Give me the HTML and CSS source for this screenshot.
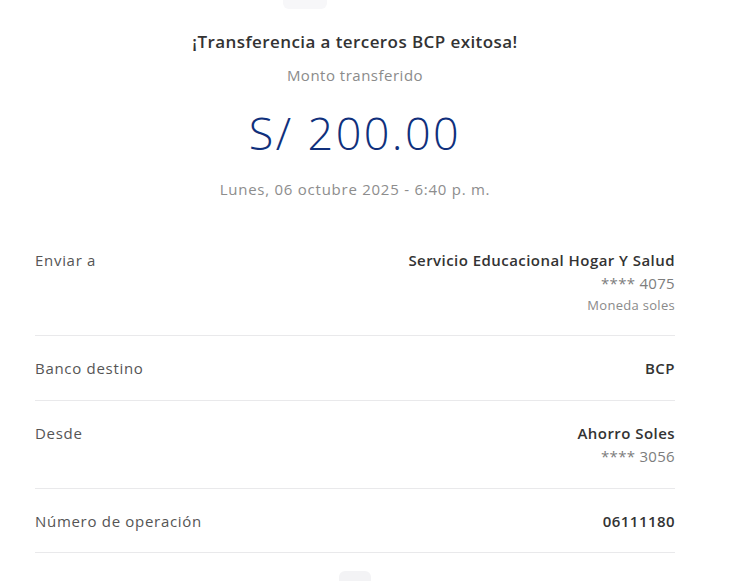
FILE: index.html
```html
<!DOCTYPE html>
<html lang="es">
<head>
<meta charset="utf-8">
<title>Transferencia exitosa</title>
<link rel="stylesheet" href="styles.css">
</head>
<body>
<div class="receipt">
  <div class="top-mark"></div>
  <header class="summary">
    <h1 class="title">¡Transferencia a terceros BCP exitosa!</h1>
    <p class="caption">Monto transferido</p>
    <p class="amount">S/ 200.00</p>
    <p class="date">Lunes, 06 octubre 2025 - 6:40 p. m.</p>
  </header>
  <section class="details">
    <div class="row">
      <span class="label">Enviar a</span>
      <div class="value">
        <span class="strong">Servicio Educacional Hogar Y Salud</span>
        <span class="sub">**** 4075</span>
        <span class="small">Moneda soles</span>
      </div>
    </div>
    <div class="row">
      <span class="label">Banco destino</span>
      <div class="value"><span class="strong">BCP</span></div>
    </div>
    <div class="row">
      <span class="label">Desde</span>
      <div class="value">
        <span class="strong">Ahorro Soles</span>
        <span class="sub">**** 3056</span>
      </div>
    </div>
    <div class="row row-last">
      <span class="label">Número de operación</span>
      <div class="value"><span class="strong">06111180</span></div>
    </div>
  </section>
  <div class="bottom-mark"></div>
</div>
</body>
</html>
```
FILE: styles.css
```css
html, body {
  margin: 0;
  padding: 0;
  background: #ffffff;
}
body {
  font-family: "Open Sans", "Noto Sans", sans-serif;
  color: #333;
  overflow: hidden;
  height: 581px;
}
.receipt {
  width: 640px;
  margin-left: 35px;
  display: flex;
  flex-direction: column;
  align-items: stretch;
}
.top-mark {
  align-self: center;
  width: 44px;
  height: 9px;
  margin-left: -100px;
  background: #f7f7f9;
  border-radius: 0 0 6px 6px;
}
.summary {
  display: flex;
  flex-direction: column;
  align-items: center;
  padding-top: 21px;
}
.title {
  margin: 0;
  font-size: 17px;
  font-weight: 600;
  line-height: 24px;
  color: #333;
  letter-spacing: 0.42px;
}
.caption {
  margin: 10px 0 0;
  font-size: 15px;
  line-height: 22px;
  color: #8b8b8b;
  letter-spacing: 0.5px;
}
.amount {
  margin: 22px 0 0;
  font-size: 45px;
  font-weight: 300;
  line-height: 50px;
  color: #10307c;
  letter-spacing: 2.4px;
}
.date {
  margin: 20px 0 0;
  font-size: 15px;
  line-height: 22px;
  color: #8d8d8d;
  letter-spacing: 0.75px;
}
.details {
  margin-top: 28px;
  display: flex;
  flex-direction: column;
}
.row {
  display: flex;
  justify-content: space-between;
  align-items: flex-start;
  padding: 21px 0 20px;
  border-bottom: 1px solid #e9e9eb;
}
.row-last {
  padding-bottom: 19px;
}
.label {
  font-size: 15px;
  line-height: 23px;
  color: #555;
  letter-spacing: 0.7px;
}
.value {
  display: flex;
  flex-direction: column;
  align-items: flex-end;
}
.strong {
  font-size: 15px;
  line-height: 23px;
  font-weight: 600;
  color: #333;
  letter-spacing: 0.45px;
}
.sub {
  font-size: 15px;
  line-height: 23px;
  color: #7d7d7d;
  letter-spacing: 0.3px;
}
.small {
  font-size: 13px;
  line-height: 20px;
  color: #8a8a8a;
  letter-spacing: 0.3px;
}
.bottom-mark {
  align-self: center;
  width: 32px;
  height: 10px;
  margin-top: 18px;
  background: #f3f3f5;
  border-radius: 6px 6px 0 0;
}
```
